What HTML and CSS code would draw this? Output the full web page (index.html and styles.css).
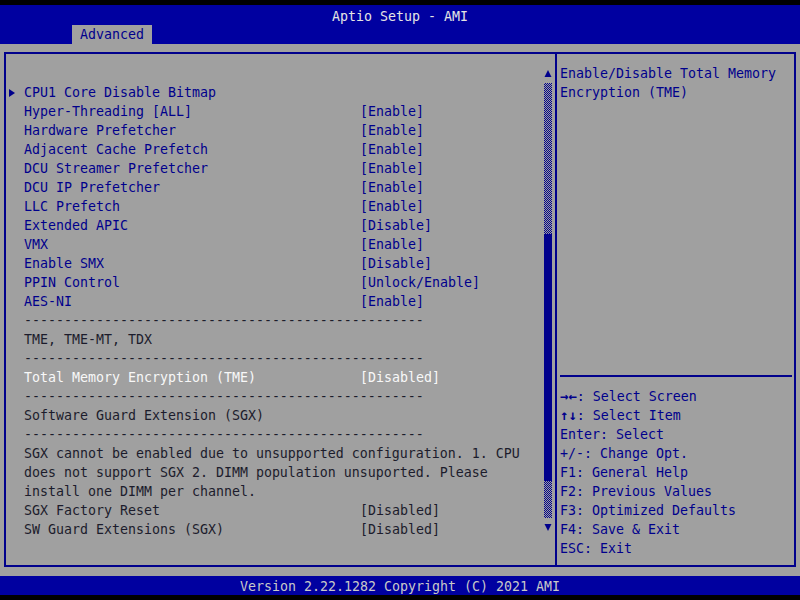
FILE: index.html
```html
<!DOCTYPE html>
<html lang="en">
<head>
    <meta charset="UTF-8">
    <title>Aptio Setup - AMI</title>
    <link rel="stylesheet" href="styles.css">
</head>
<body>
    <div class="screen">
        <div class="top-bar">
            <div class="title">Aptio Setup - AMI</div>
            <div class="tabs"><span class="tab">Advanced</span></div>
        </div>

        <div class="main">
            <div class="frame">
                <div class="list-pane">
                    <div class="list">
                        <div class="row"></div>
                        <div class="row">
                            <span class="mark"><svg width="8" height="10" viewBox="0 0 8 10"><path d="M1 1 L7 5 L1 9 Z" fill="#00008c"/></svg></span>
                            <span class="label">CPU1 Core Disable Bitmap</span>
                        </div>
                        <div class="row"><span class="mark"></span><span class="label">Hyper-Threading [ALL]</span><span class="value">[Enable]</span></div>
                        <div class="row"><span class="mark"></span><span class="label">Hardware Prefetcher</span><span class="value">[Enable]</span></div>
                        <div class="row"><span class="mark"></span><span class="label">Adjacent Cache Prefetch</span><span class="value">[Enable]</span></div>
                        <div class="row"><span class="mark"></span><span class="label">DCU Streamer Prefetcher</span><span class="value">[Enable]</span></div>
                        <div class="row"><span class="mark"></span><span class="label">DCU IP Prefetcher</span><span class="value">[Enable]</span></div>
                        <div class="row"><span class="mark"></span><span class="label">LLC Prefetch</span><span class="value">[Enable]</span></div>
                        <div class="row"><span class="mark"></span><span class="label">Extended APIC</span><span class="value">[Disable]</span></div>
                        <div class="row"><span class="mark"></span><span class="label">VMX</span><span class="value">[Enable]</span></div>
                        <div class="row"><span class="mark"></span><span class="label">Enable SMX</span><span class="value">[Disable]</span></div>
                        <div class="row"><span class="mark"></span><span class="label">PPIN Control</span><span class="value">[Unlock/Enable]</span></div>
                        <div class="row"><span class="mark"></span><span class="label">AES-NI</span><span class="value">[Enable]</span></div>
                        <div class="row info"><span class="mark"></span><span class="label">--------------------------------------------------</span></div>
                        <div class="row info"><span class="mark"></span><span class="label">TME, TME-MT, TDX</span></div>
                        <div class="row info"><span class="mark"></span><span class="label">--------------------------------------------------</span></div>
                        <div class="row selected"><span class="mark"></span><span class="label">Total Memory Encryption (TME)</span><span class="value">[Disabled]</span></div>
                        <div class="row info"><span class="mark"></span><span class="label">--------------------------------------------------</span></div>
                        <div class="row info"><span class="mark"></span><span class="label">Software Guard Extension (SGX)</span></div>
                        <div class="row info"><span class="mark"></span><span class="label">--------------------------------------------------</span></div>
                        <p class="note">SGX cannot be enabled due to unsupported configuration. 1. CPU does not support SGX 2. DIMM population unsuported. Please install one DIMM per channel.</p>
                        <div class="row info"><span class="mark"></span><span class="label">SGX Factory Reset</span><span class="value">[Disabled]</span></div>
                        <div class="row info"><span class="mark"></span><span class="label">SW Guard Extensions (SGX)</span><span class="value">[Disabled]</span></div>
                    </div>

                    <div class="scrollbar">
                        <div class="arrow"><svg width="8" height="19" viewBox="0 0 8 19"><path d="M4 6 L7.5 13 L0.5 13 Z" fill="#00008c"/></svg></div>
                        <div class="track">
                            <div class="dots dots-top"></div>
                            <div class="thumb"></div>
                            <div class="dots dots-bottom"></div>
                        </div>
                        <div class="arrow"><svg width="8" height="19" viewBox="0 0 8 19"><path d="M0.5 6 L7.5 6 L4 13 Z" fill="#00008c"/></svg></div>
                    </div>
                </div>

                <div class="help-pane">
                    <p class="desc">Enable/Disable Total Memory Encryption (TME)</p>
                    <div class="keys">
                        <div class="key"><b>→←</b>: Select Screen</div>
                        <div class="key"><b>↑↓</b>: Select Item</div>
                        <div class="key">Enter: Select</div>
                        <div class="key">+/-: Change Opt.</div>
                        <div class="key">F1: General Help</div>
                        <div class="key">F2: Previous Values</div>
                        <div class="key">F3: Optimized Defaults</div>
                        <div class="key">F4: Save &amp; Exit</div>
                        <div class="key">ESC: Exit</div>
                    </div>
                </div>
            </div>
        </div>

        <div class="footer">Version 2.22.1282 Copyright (C) 2021 AMI</div>
    </div>
</body>
</html>
```

FILE: styles.css
```css
* {
    margin: 0;
    padding: 0;
    box-sizing: border-box;
}
body {
    background: #000;
    font-family: 'DejaVu Sans Mono', 'Liberation Mono', monospace;
    font-size: 13.29px;
    line-height: 19px;
    color: #00008c;
}
.screen {
    width: 800px;
    height: 600px;
    padding: 5px 0;
    display: flex;
    flex-direction: column;
}
.top-bar {
    background: #0000a0;
    height: 39px;
    padding-top: 2px;
}
.title {
    height: 18px;
    text-align: center;
    color: #e4e4e4;
}
.tabs {
    height: 19px;
    padding-left: 72px;
}
.tab {
    display: inline-block;
    width: 80px;
    height: 19px;
    background: #a0a0a0;
    color: #00008c;
    text-align: center;
}
.main {
    background: #a0a0a0;
    height: 532px;
    padding: 8px 4px 9px 4px;
}
.frame {
    height: 100%;
    border: 2px solid #00008c;
    display: flex;
}
.list-pane {
    width: 551px;
    border-right: 2px solid #00008c;
    display: flex;
    padding-top: 9px;
}
.list {
    flex: 1;
    padding-top: 1px;
}
.row {
    display: grid;
    grid-template-columns: 18px 336px auto;
    height: 19px;
    white-space: pre;
}
.mark {
    display: flex;
    align-items: center;
    padding-left: 2px;
}
.info {
    color: #1c1c2c;
}
.selected {
    color: #f8f8f8;
}
.note {
    color: #1c1c2c;
    margin-left: 18px;
    width: 504px;
}
.scrollbar {
    width: 8px;
    margin-right: 3px;
    padding-top: 1px;
}
.arrow {
    height: 19px;
}
.arrow svg {
    display: block;
}
.track {
    height: 435px;
    display: flex;
    flex-direction: column;
}
.dots {
    background: repeating-conic-gradient(#00008c 0 25%, #a0a0a0 0 50%) 0 0 / 2px 2px;
}
.dots-top {
    height: 151px;
}
.thumb {
    height: 247px;
    background: #00008c;
}
.dots-bottom {
    flex: 1;
}
.help-pane {
    flex: 1;
    display: flex;
    flex-direction: column;
    padding: 10px 2px 7px 3px;
}
.desc {
    width: 232px;
}
.keys {
    margin-top: auto;
    border-top: 2px solid #00008c;
    padding-top: 10px;
}
.key {
    height: 19px;
    white-space: pre;
}
.key b {
    font-weight: bold;
    font-size: 14px;
}
.footer {
    background: #0000a0;
    height: 19px;
    padding-top: 1px;
    text-align: center;
    color: #c8c8c8;
}
```
